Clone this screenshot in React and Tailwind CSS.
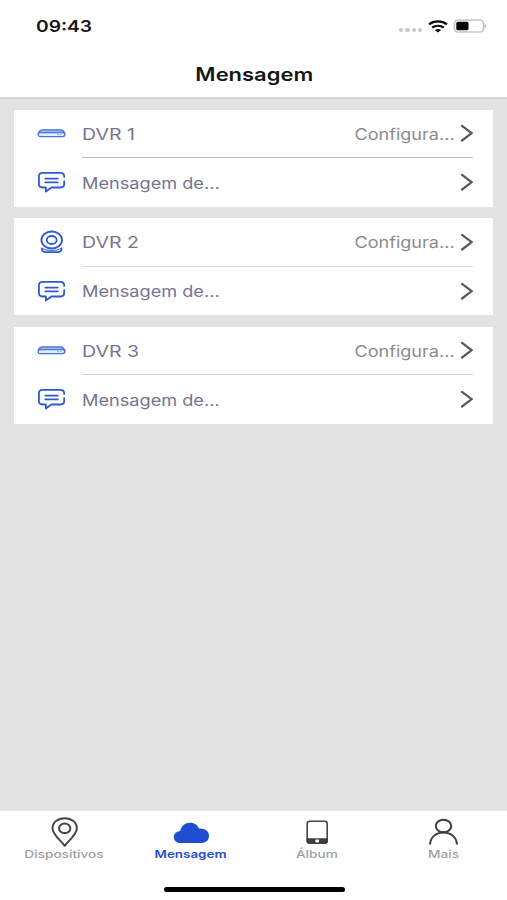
import React from 'react'
import clsx from 'clsx'

const devices = [
  { name: 'DVR 1', type: 'dvr', divider: 'bg-[#bfbfc0]' },
  { name: 'DVR 2', type: 'camera', divider: 'bg-[#dededf]' },
  { name: 'DVR 3', type: 'dvr', divider: 'bg-[#d4d4d5]' },
]

const tabs = [
  { label: 'Dispositivos', icon: PinIcon },
  { label: 'Mensagem', icon: CloudIcon, active: true },
  { label: 'Álbum', icon: TabletIcon },
  { label: 'Mais', icon: PersonIcon },
]

function DvrIcon() {
  return (
    <svg width="29" height="28" viewBox="0 0 29 28" fill="none" stroke="#4674db" strokeWidth="1.3">
      <path d="M1.500 13.800c.8-1.500 2-2.800 4-2.800h18c2 0 3.200 1.300 4 2.800z" fill="#c6d7f8" />
      <rect x="1.200" y="13.500" width="26.600" height="4.200" rx="2.100" fill="#e3ecfd" />
      <path d="M20.500 15.600h1.400M23.300 15.600h1" strokeWidth="0.8" />
    </svg>
  )
}

function CameraIcon() {
  return (
    <svg width="29" height="28" viewBox="0 0 29 28" fill="none" stroke="#2c5ad0" strokeWidth="1.8" strokeLinecap="round" strokeLinejoin="round">
      <ellipse cx="14.700" cy="12" rx="10.300" ry="8.500" />
      <ellipse cx="14.700" cy="12" rx="5" ry="4" />
      <path d="M5 20.400c-.8 2.300 1.300 3.800 4.200 3.800h11c2.900 0 5-1.500 4.200-3.800" />
      <path d="M5 20.400c3 1.700 6.500 2 9.700 2s6.700-.3 9.700-2" strokeWidth="1" />
    </svg>
  )
}

function MessageIcon() {
  return (
    <svg width="29" height="28" viewBox="0 0 29 28" fill="none" stroke="#2c5ad0" strokeWidth="1.8" strokeLinecap="round" strokeLinejoin="round">
      <path d="M27.200 8.900V8.200c0-2.200-1.400-3.400-3.800-3.400H5.700C3.300 4.800 1.900 6 1.900 8.200v7.900c0 2.200 1.400 3.400 3.800 3.400h3.200v4l5.500-4h9c2.400 0 3.800-1.200 3.800-3.400v-2.900" />
      <path d="M8.300 10.600h12.500M8.300 14.300h12.500" />
    </svg>
  )
}

function ChevronIcon() {
  return (
    <svg width="14" height="18" viewBox="0 0 14 18" fill="none" stroke="#59595c" strokeWidth="2.2" strokeLinecap="round">
      <path d="M3 1.900 12.700 9.200 3 16.500" />
    </svg>
  )
}

function PinIcon() {
  return (
    <svg width="36" height="32" viewBox="0 0 36 32" fill="none" stroke="#454545" strokeWidth="2" strokeLinejoin="round">
      <path d="M18.700 29.800C15.200 25 6.500 18.500 6.500 12.200 6.500 6.300 11.900 2.200 18.700 2.200s12.200 4.100 12.200 10C30.900 18.500 22.200 25 18.700 29.800z" />
      <ellipse cx="18.700" cy="12.300" rx="5.700" ry="4.800" />
    </svg>
  )
}

function CloudIcon() {
  return (
    <svg width="36" height="32" viewBox="0 0 36 32" fill="#1d4fd0">
      <path d="M8 27C3.500 27 .8 24.300.8 20.900c0-3.200 2.500-5.600 6.400-6C8 10.100 12 6.700 17.200 6.700c4.200 0 7.500 2.300 8.800 5.900 5.800-.5 10 2.600 10 7.200 0 4.300-3.200 7.200-7.800 7.200z" />
    </svg>
  )
}

function TabletIcon() {
  return (
    <svg width="36" height="32" viewBox="0 0 36 32" fill="none">
      <rect x="8.200" y="5.200" width="20" height="22" rx="2.500" stroke="#454545" strokeWidth="1.600" />
      <path d="M7.600 22.200h21.200v3c0 1.600-1 2.500-2.700 2.500H10.300c-1.700 0-2.700-.9-2.700-2.500z" fill="#3d3d3d" />
      <rect x="16.400" y="23.500" width="3.600" height="3" rx="0.800" fill="#fff" />
    </svg>
  )
}

function PersonIcon() {
  return (
    <svg width="36" height="32" viewBox="0 0 36 32" fill="none" stroke="#3d3d3d" strokeWidth="2">
      <ellipse cx="17.500" cy="10" rx="7.700" ry="6.300" />
      <path d="M4.100 28.500c0-7 5.800-12 13.400-12s13.400 5 13.400 12" />
    </svg>
  )
}

function StatusBar() {
  return (
    <div className="flex h-[52px] items-center justify-between pr-[20px] pl-[36px]">
      <span className="origin-left scale-x-[1.2] text-[16px] leading-none font-semibold text-[#161616]">09:43</span>
      <div className="flex items-center">
        <div className="mt-[8px] mr-[6px] flex gap-[2px]">
          {[0, 1, 2, 3].map(i => (
            <span key={i} className="h-[4px] w-[4.200px] rounded-full bg-[#c9c9c9]" />
          ))}
        </div>
        <svg width="20" height="13" viewBox="0 0 20 13" fill="none" stroke="#0c0c0c" strokeWidth="2.200">
          <path d="M1 4.300c5-4 13-4 18 0" />
          <path d="M4.200 7.700c3.300-2.600 8.300-2.600 11.600 0" />
          <path d="M6.900 9.900c1.800-1.300 4.400-1.300 6.200 0L10 12.500z" fill="#0c0c0c" stroke="none" />
        </svg>
        <svg className="ml-[5px]" width="34" height="14" viewBox="0 0 34 14">
          <rect x="1.500" y="1" width="29" height="12" rx="3.600" fill="none" stroke="#c4c4c4" strokeWidth="1.600" />
          <rect x="3.300" y="2.800" width="12.200" height="8.400" rx="1.600" fill="#050505" />
          <path d="M31.700 4.800c1.700.7 1.700 3.700 0 4.400z" fill="#a5a5a5" />
        </svg>
      </div>
    </div>
  )
}

function DeviceCard({ device }) {
  return (
    <div className="flex h-[97px] flex-col bg-white pr-[20px] pl-[23px]">
      <div className="flex h-[48px] items-center">
        {device.type === 'camera' ? <CameraIcon /> : <DvrIcon />}
        <span className="ml-[16px] origin-left scale-x-[1.220] pt-[1px] text-[16px] leading-none text-[#77748f]">{device.name}</span>
        <span className="mr-[4px] ml-auto origin-right scale-x-[1.130] pt-[1px] text-[16px] leading-none text-[#8b8b8e]">Configura...</span>
        <ChevronIcon />
      </div>
      <div className={clsx('ml-[45px] h-px shrink-0', device.divider)} />
      <div className="flex h-[49px] items-center">
        <MessageIcon />
        <span className="ml-[16px] origin-left scale-x-[1.135] pt-[1px] text-[16px] leading-none text-[#77748f]">Mensagem de...</span>
        <span className="ml-auto"><ChevronIcon /></span>
      </div>
    </div>
  )
}

export default function App() {
  return (
    <div className="flex h-[900px] w-[507px] flex-col overflow-hidden bg-white font-['Inter','Liberation_Sans',sans-serif]">
      <header className="h-[99px] shrink-0 border-b-2 border-[#d5d5d5]">
        <StatusBar />
        <h1 className="mt-[13px] flex justify-center pl-px text-[18px] leading-[20px] font-semibold text-[#161616]">
          <span className="scale-x-[1.220]">Mensagem</span>
        </h1>
      </header>

      <main className="flex flex-1 flex-col gap-[11.500px] bg-[#e3e3e3] px-[14px] pt-[10.500px]">
        {devices.map(d => (
          <DeviceCard key={d.name} device={d} />
        ))}
      </main>

      <nav className="flex h-[89px] shrink-0 flex-col items-center bg-white">
        <div className="grid w-full grid-cols-4 pt-[5px] pl-px">
          {tabs.map(({ label, icon: Icon, active }) => (
            <div key={label} className="flex flex-col items-center">
              <Icon />
              <span
                className={clsx(
                  'text-[11px] leading-[13px]',
                  active ? 'scale-x-[1.220] font-semibold text-[#1d4fd0]' : 'scale-x-[1.240] font-medium text-[#a0a0a0]'
                )}
              >
                {label}
              </span>
            </div>
          ))}
        </div>
        <div className="mt-[26px] ml-px h-[5px] w-[181px] rounded-full bg-black" />
      </nav>
    </div>
  )
}
